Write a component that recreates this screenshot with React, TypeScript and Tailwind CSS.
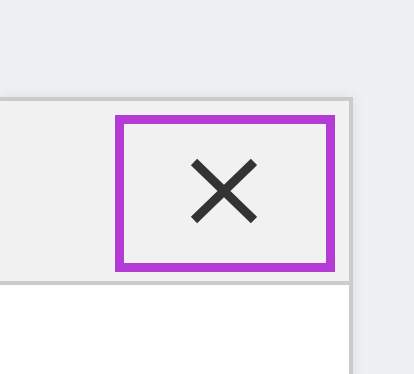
const CloseIcon = () => (
  <svg width="68" height="66" viewBox="0 0 68 66" fill="none">
    <path d="M5 4L65 62M65 4L5 62" stroke="#333333" strokeWidth="9" />
  </svg>
);

export default function App() {
  return (
    <div className="h-[374px] w-[414px] overflow-hidden bg-[#eff0f4] pt-[97px]">
      <div className="h-[300px] w-[353px] border-r-4 border-t-4 border-[#cbcbcb] bg-white shadow-[0_0_14px_rgba(0,0,0,0.08)]">
        <div className="flex h-[184px] items-start justify-end border-b-4 border-[#cbcbcb] bg-[#f1f1f1] pr-[14px] pt-[14px]">
          <button className="flex h-[157px] w-[220px] items-center justify-center border-[9px] border-[#b43bd6] pb-[6px] pr-[4px]">
            <CloseIcon />
          </button>
        </div>
      </div>
    </div>
  );
}
